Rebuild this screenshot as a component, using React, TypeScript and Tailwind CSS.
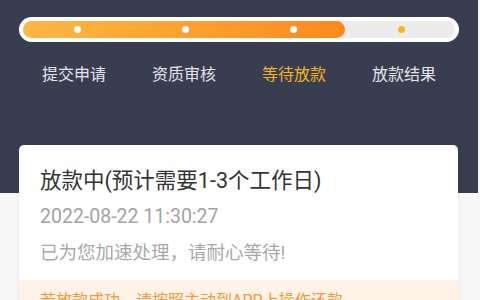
export default function App() {
  const steps = ["提交申请", "资质审核", "等待放款", "放款结果"];
  return (
    <div
      className="w-[480px] h-[300px] overflow-hidden bg-[#f7f7f8]"
      style={{ fontFamily: "Roboto, 'Noto Sans CJK SC', sans-serif" }}
    >
      <div className="w-[478px] h-[193px] bg-[#393d50] px-[19px] pt-[17px]">
        <div className="h-[25px] rounded-full bg-white p-[4px]">
          <div className="relative h-[17px] rounded-full bg-[#ececec]">
            <div className="absolute left-0 top-0 h-full w-[322px] rounded-full bg-gradient-to-r from-[#fdb843] to-[#fb8a1c]" />
            <div className="absolute inset-0 grid grid-cols-4 items-center">
              {[0, 1, 2, 3].map((i) => (
                <div key={i} className="flex justify-center">
                  <div
                    className={
                      i < 3
                        ? "w-[7px] h-[7px] rounded-full bg-white"
                        : "w-[7px] h-[7px] rounded-full bg-[#f9b81a]"
                    }
                  />
                </div>
              ))}
            </div>
          </div>
        </div>
        <div className="mt-[22px] grid grid-cols-4">
          {steps.map((s, i) => (
            <div
              key={s}
              className={
                i === 2
                  ? "text-center text-[16px] leading-[22px] text-[#f5b324]"
                  : "text-center text-[16px] leading-[22px] text-[#e4e5ea]"
              }
            >
              {s}
            </div>
          ))}
        </div>
      </div>
      <div className="mx-[19px] -mt-[48px] w-[439px] rounded-[5px] bg-white shadow-[0_1px_6px_rgba(0,0,0,0.06)] overflow-hidden">
        <div className="px-[21px] pt-[22px] pb-[15px]">
          <div className="text-[21.5px] leading-[28px] text-[#333333]">
            放款中(预计需要1-3个工作日)
          </div>
          <div className="mt-[10px] text-[19.5px] leading-[24px] text-[#a3a3a3]">
            2022-08-22 11:30:27
          </div>
          <div className="mt-[12px] text-[18.5px] leading-[24px] text-[#a8a8a8]">
            已为您加速处理，请耐心等待!
          </div>
        </div>
        <div className="bg-[#fff2e6] px-[21px] pt-[10px] pb-[10px] text-[16px] leading-[22px] text-[#f39a3e]">
          若放款成功，请按照主动到APP上操作还款
        </div>
      </div>
    </div>
  );
}
